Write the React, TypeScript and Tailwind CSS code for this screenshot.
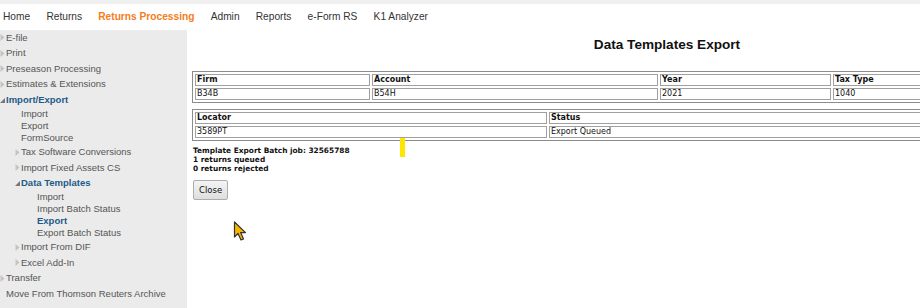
type Item = { label: string; level: number; arrow?: "closed" | "open"; active?: boolean; leaf?: boolean };

const items: Item[] = [
  { label: "E-file", level: 0, arrow: "closed" },
  { label: "Print", level: 0, arrow: "closed" },
  { label: "Preseason Processing", level: 0, arrow: "closed" },
  { label: "Estimates & Extensions", level: 0, arrow: "closed" },
  { label: "Import/Export", level: 0, arrow: "open", active: true },
  { label: "Import", level: 1, leaf: true },
  { label: "Export", level: 1, leaf: true },
  { label: "FormSource", level: 1, leaf: true },
  { label: "Tax Software Conversions", level: 1, arrow: "closed" },
  { label: "Import Fixed Assets CS", level: 1, arrow: "closed" },
  { label: "Data Templates", level: 1, arrow: "open", active: true },
  { label: "Import", level: 2, leaf: true },
  { label: "Import Batch Status", level: 2, leaf: true },
  { label: "Export", level: 2, leaf: true, active: true },
  { label: "Export Batch Status", level: 2, leaf: true },
  { label: "Import From DIF", level: 1, arrow: "closed" },
  { label: "Excel Add-In", level: 1, arrow: "closed" },
  { label: "Transfer", level: 0, arrow: "closed" },
  { label: "Move From Thomson Reuters Archive", level: 0 },
];

const nav = ["Home", "Returns", "Returns Processing", "Admin", "Reports", "e-Form RS", "K1 Analyzer"];

function Arrow({ open }: { open: boolean }) {
  return open ? (
    <svg width="5" height="5" viewBox="0 0 5 5" className="shrink-0">
      <path d="M5 0 L5 5 L0 5 Z" fill="#777" />
    </svg>
  ) : (
    <svg width="5" height="7" viewBox="0 0 5 7" className="shrink-0">
      <path d="M0.5 0 L4.5 3.5 L0.5 7 Z" fill="#c4c4c4" />
    </svg>
  );
}

function SideItem({ it }: { it: Item }) {
  const pad = it.level === 0 ? "pl-0" : it.level === 1 ? "pl-[15px]" : "pl-[37px]";
  const h = it.leaf ? "h-[12.1px]" : "h-[15.6px]";
  const color = it.active ? "text-[#1d5a88] font-bold" : "text-[#555]";
  return (
    <div className={`flex items-center ${h} ${pad}`}>
      {it.arrow ? (
        <span className="w-[6px] flex items-center">
          <Arrow open={it.arrow === "open"} />
        </span>
      ) : it.level < 2 ? (
        <span className="w-[6px]" />
      ) : null}
      <span className={`${color} whitespace-nowrap`}>{it.label}</span>
    </div>
  );
}

const cell = "border border-[#a0a0a0] px-[1px] h-[12px] leading-[10px] text-left align-middle";

export default function App() {
  return (
    <div className="w-[920px] h-[308px] overflow-hidden bg-white relative flex flex-col" style={{ fontFamily: '"Liberation Sans", Arial, sans-serif' }}>
      <div className="h-[4px] bg-[#f0f0f0]" />
      <div className="h-[26px] flex items-center pl-[3px] gap-[16.2px] text-[10.2px] text-[#333]">
        {nav.map((n) => (
          <span key={n} className={n === "Returns Processing" ? "text-[#f47d20] font-bold" : ""}>
            {n}
          </span>
        ))}
      </div>
      <div className="flex flex-1 min-h-0">
        <aside className="w-[187px] shrink-0 bg-[#ebebeb] text-[9.5px] pt-0">
          {items.map((it, i) => (
            <SideItem key={i} it={it} />
          ))}
        </aside>
        <main className="flex-1 pl-[6px] min-w-0 overflow-hidden">
          <h1 className="text-[13.6px] font-bold text-[#111] text-center w-[948px] mt-[7px] leading-[16px]">Data Templates Export</h1>
          <div className="mt-[18px]" style={{ fontFamily: '"DejaVu Sans", Verdana, sans-serif' }}>
            <table className="border-separate border-spacing-[2px] border border-[#8c8c8c] text-[8px] text-[#111] w-[830px] table-fixed -ml-[1px]">
              <colgroup>
                <col className="w-[175px]" />
                <col className="w-[286px]" />
                <col className="w-[171px]" />
                <col className="w-[188px]" />
              </colgroup>
              <tbody>
                <tr className="font-bold">
                  <td className={cell}>Firm</td>
                  <td className={cell}>Account</td>
                  <td className={cell}>Year</td>
                  <td className={cell}>Tax Type</td>
                </tr>
                <tr>
                  <td className={cell}>B34B</td>
                  <td className={cell}>B54H</td>
                  <td className={cell}>2021</td>
                  <td className={cell}>1040</td>
                </tr>
              </tbody>
            </table>
            <table className="mt-[6px] border-separate border-spacing-[2px] border border-[#8c8c8c] text-[8px] text-[#111] w-[830px] table-fixed -ml-[1px]">
              <colgroup>
                <col className="w-[352px]" />
                <col className="w-[470px]" />
              </colgroup>
              <tbody>
                <tr className="font-bold">
                  <td className={`${cell} border-[#555]`}>Locator</td>
                  <td className={`${cell} border-[#555]`}>Status</td>
                </tr>
                <tr>
                  <td className={cell}>3589PT</td>
                  <td className={cell}>Export Queued</td>
                </tr>
              </tbody>
            </table>
            <div className="mt-[5px] text-[7.4px] font-bold text-[#111] leading-[9px]">
              <div>Template Export Batch job: 32565788</div>
              <div>1 returns queued</div>
              <div>0 returns rejected</div>
            </div>
            <button className="mt-[7px] h-[20px] px-[5px] text-[8.5px] text-[#111] border border-[#adadad] rounded-[2px] bg-gradient-to-b from-[#f4f4f4] to-[#dedede]">
              Close
            </button>
          </div>
        </main>
      </div>
      <div className="absolute left-[400px] top-[138px] w-[5px] h-[19px] bg-[#ffe600]" />
      <svg className="absolute left-[233px] top-[221px]" width="16" height="21" viewBox="0 0 16 21">
        <path d="M1.5 1 L1.5 16 L5 12.5 L8 19 L10.5 18 L7.6 11.6 L12.5 11.6 Z" fill="#f7b500" stroke="#333" strokeWidth="1.2" strokeLinejoin="round" />
      </svg>
    </div>
  );
}
